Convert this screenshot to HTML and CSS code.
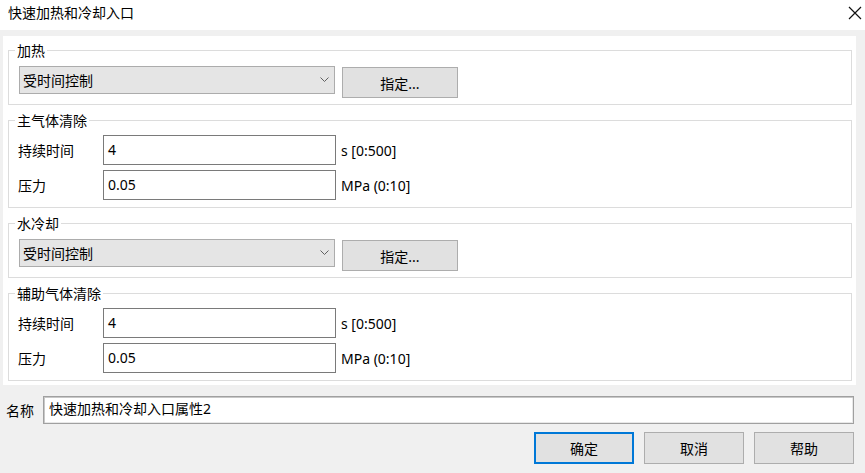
FILE: index.html
```html
<!DOCTYPE html>
<html lang="zh-CN">
<head>
<meta charset="utf-8">
<title>快速加热和冷却入口</title>
<link rel="stylesheet" href="styles.css">
</head>
<body>
<div class="titlebar">
  <span class="title">快速加热和冷却入口</span>
  <svg class="close" width="14" height="14" viewBox="0 0 14 14"><path d="M1 1 L13 13 M13 1 L1 13" stroke="#111" stroke-width="1.2" fill="none"/></svg>
</div>
<div class="content">
  <div class="panel">
    <fieldset class="group g-select g-first">
      <legend>加热</legend>
      <div class="row">
        <div class="select"><span>受时间控制</span><svg class="chev" width="9" height="5" viewBox="0 0 9 5"><path d="M0.5 0.5 L4.5 4.5 L8.5 0.5" stroke="#606060" stroke-width="1" fill="none"/></svg></div>
        <button class="btn assign">指定...</button>
      </div>
    </fieldset>
    <fieldset class="group g-fields">
      <legend>主气体清除</legend>
      <div class="field"><label>持续时间</label><div class="input">4</div><span class="unit">s [0:500]</span></div>
      <div class="field"><label>压力</label><div class="input">0.05</div><span class="unit">MPa (0:10]</span></div>
    </fieldset>
    <fieldset class="group g-select">
      <legend>水冷却</legend>
      <div class="row">
        <div class="select"><span>受时间控制</span><svg class="chev" width="9" height="5" viewBox="0 0 9 5"><path d="M0.5 0.5 L4.5 4.5 L8.5 0.5" stroke="#606060" stroke-width="1" fill="none"/></svg></div>
        <button class="btn assign">指定...</button>
      </div>
    </fieldset>
    <fieldset class="group g-fields">
      <legend>辅助气体清除</legend>
      <div class="field"><label>持续时间</label><div class="input">4</div><span class="unit">s [0:500]</span></div>
      <div class="field"><label>压力</label><div class="input">0.05</div><span class="unit">MPa (0:10]</span></div>
    </fieldset>
  </div>
  <div class="name-row">
    <label>名称</label>
    <div class="name-input">快速加热和冷却入口属性2</div>
  </div>
  <div class="actions">
    <button class="btn action default">确定</button>
    <button class="btn action">取消</button>
    <button class="btn action">帮助</button>
  </div>
</div>
</body>
</html>
```
FILE: styles.css
```css
html, body {
  margin: 0;
  padding: 0;
}
body {
  width: 865px;
  height: 473px;
  background: #f0f0f0;
  font-family: "Noto Sans", "Noto Sans CJK SC", sans-serif;
  font-size: 14px;
  color: #000;
  overflow: hidden;
}
.titlebar {
  height: 30px;
  background: #fff;
  display: flex;
  align-items: center;
  justify-content: space-between;
  padding: 0 3px 0 8px;
}
.title {
  line-height: 20px;
  margin-top: -4px;
}
.close {
  margin-top: -4px;
}
.content {
  padding: 6px 9px 0 3px;
}
.panel {
  background: #fff;
  padding: 5px 4px 4px 5px;
}
.group {
  margin: 6px 0 0 0;
  border: 1px solid #dcdcdc;
  padding: 0 8px 0 9px;
  min-inline-size: 0;
}
.g-first {
  margin-top: 0;
}
.group legend {
  padding: 0 2px;
  margin-left: -3px;
  line-height: 19px;
}
.g-select {
  padding-top: 6px;
  padding-bottom: 6px;
  padding-left: 10px;
}
.g-select legend {
  margin-left: -4px;
}
.g-fields {
  padding-top: 5px;
  padding-bottom: 7px;
}
.row {
  display: flex;
  align-items: flex-start;
}
.select {
  box-sizing: border-box;
  width: 316px;
  height: 28px;
  background: #e5e5e5;
  border: 1px solid #acacac;
  display: flex;
  align-items: center;
  justify-content: space-between;
  padding: 0 5px 0 3px;
}
.chev {
  margin-top: -1px;
}
.btn {
  box-sizing: border-box;
  font-family: inherit;
  font-size: 14px;
  color: #000;
  background: #e1e1e1;
  border: 1px solid #adadad;
  padding: 0;
  margin: 0;
}
.assign {
  width: 116px;
  height: 31px;
  margin-left: 7px;
  margin-top: 1px;
}
.field {
  display: flex;
  align-items: center;
  height: 30px;
}
.field + .field {
  margin-top: 5px;
}
.field label {
  width: 85px;
}
.input {
  box-sizing: border-box;
  width: 233px;
  height: 30px;
  border: 1px solid #7a7a7a;
  padding: 0 4px;
  line-height: 28px;
  background: #fff;
}
.unit {
  margin-left: 5px;
}
.name-row {
  display: flex;
  align-items: center;
  margin-top: 11px;
  padding: 0 2px 0 3px;
}
.name-row label {
  width: 37px;
}
.name-input {
  flex: 1;
  box-sizing: border-box;
  height: 28px;
  line-height: 24px;
  background: #fff;
  border: 1px solid #a0a0a0;
  box-shadow: inset 1px 1px 0 #c8c8c8, inset -1px -1px 0 #e8e8e8;
  padding: 0 5px;
}
.actions {
  display: flex;
  justify-content: flex-end;
  gap: 10px;
  margin-top: 8px;
  padding-right: 2px;
}
.action {
  width: 100px;
  height: 32px;
}
.default {
  border: 2px solid #0078d7;
}
```
